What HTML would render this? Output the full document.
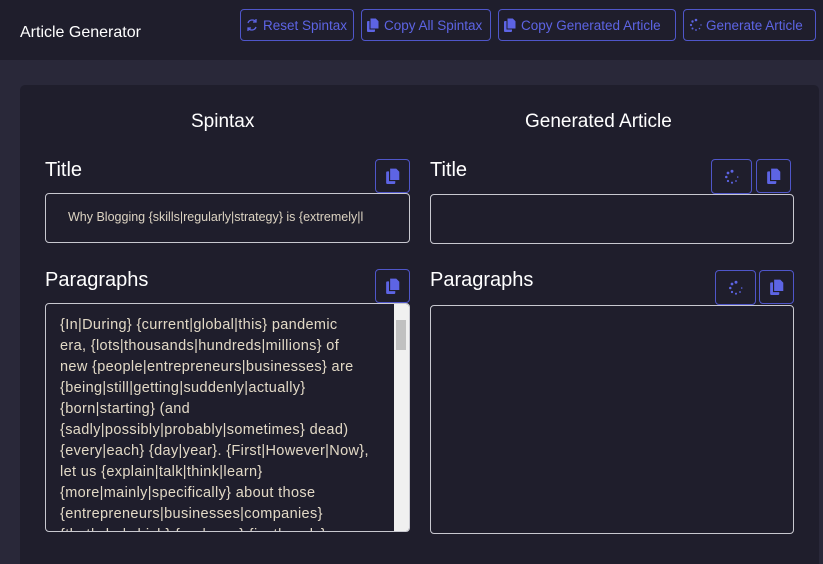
<!DOCTYPE html>
<html><head><style>
*{box-sizing:border-box;margin:0;padding:0}
html,body{width:823px;height:564px;overflow:hidden}
body{background:#292839;font-family:"Liberation Sans",sans-serif;position:relative}
.nav{position:absolute;left:0;top:0;width:823px;height:60px;background:#1f1e2c}
.brand{position:absolute;left:20px;top:24px;color:#fff;font-size:16px}
.nb{position:absolute;top:9px;height:32px;border:1px solid #4f56c9;border-radius:4px;color:#5d64e4;font-size:13.5px;line-height:31px;padding-left:22px;white-space:nowrap}
.nb svg{position:absolute;left:5px;top:8px}
.card{position:absolute;left:20px;top:85px;width:799px;height:479px;background:#1f1e2c;border-radius:5px 5px 0 0}
.h{position:absolute;color:#fff;font-size:19px}
.lbl{position:absolute;color:#fff;font-size:20px}
.ib{position:absolute;border:1px solid #4f56c9;border-radius:4px}
.ib svg{position:absolute;left:50%;top:50%;transform:translate(-50%,-50%)}
.box{position:absolute;border:1px solid #c8c8d0;border-radius:4px}
.ta{position:absolute;left:45px;top:303px;width:365px;height:229px;border:1px solid #c8c8d0;border-radius:4px;background:#1f1e2c;overflow:hidden}
.ta p{position:absolute;left:14px;top:11px;color:#e2d9c6;font-size:14.5px;line-height:21px;white-space:pre;letter-spacing:0.35px}
.sb{position:absolute;right:0;top:0;width:15px;height:100%;background:#f0f0f0}
.thumb{position:absolute;left:2px;top:16px;width:10px;height:30px;background:#c1c1c1}
</style></head><body>
<div class="nav">
<div class="brand">Article Generator</div>
<div class="nb" style="left:240px;width:114px"><svg width="12" height="14" viewBox="0 0 12 14"><path d="M10 4A4.5 4.5 0 0 0 2 5M2 10A4.5 4.5 0 0 0 10 9" fill="none" stroke="#5d64e4" stroke-width="1.3"/><path d="M10 1v3H7M2 13v-3h3" fill="none" stroke="#5d64e4" stroke-width="1.3"/></svg>Reset Spintax</div>
<div class="nb" style="left:361px;width:130px"><svg width="12" height="14" viewBox="0 0 12 14"><rect x="0" y="3" width="8" height="11" rx="1" fill="#5d64e4"/><path d="M3 0h6l3 3v8H3z" fill="#5d64e4" stroke="#1f1e2c" stroke-width="1"/></svg>Copy All Spintax</div>
<div class="nb" style="left:498px;width:178px"><svg width="12" height="14" viewBox="0 0 12 14"><rect x="0" y="3" width="8" height="11" rx="1" fill="#5d64e4"/><path d="M3 0h6l3 3v8H3z" fill="#5d64e4" stroke="#1f1e2c" stroke-width="1"/></svg>Copy Generated Article</div>
<div class="nb" style="left:683px;width:133px"><svg width="14" height="14" viewBox="0 0 14 14" fill="#5d64e4"><circle cx="7" cy="2" r="1.3"/><circle cx="3.5" cy="3.5" r="1.2"/><circle cx="2" cy="7" r="1.1"/><circle cx="3.5" cy="10.5" r="1"/><circle cx="7" cy="12" r=".9"/><circle cx="10.5" cy="10.5" r=".8"/><circle cx="12" cy="7" r=".7"/></svg>Generate Article</div>
</div>
<div class="card"></div>
<div class="h" style="left:191px;top:111px">Spintax</div>
<div class="h" style="left:525px;top:111px">Generated Article</div>

<div class="lbl" style="left:45px;top:159px">Title</div>
<div class="ib" style="left:375px;top:159px;width:35px;height:34px"><svg width="14" height="16" viewBox="0 0 12 14"><rect x="0" y="3" width="8" height="11" rx="1" fill="#5d64e4"/><path d="M3 0h6l3 3v8H3z" fill="#5d64e4" stroke="#1f1e2c" stroke-width="1"/></svg></div>
<div class="box" style="left:45px;top:193px;width:365px;height:50px;overflow:hidden"><div style="position:absolute;left:22px;top:16px;color:#dcd3c2;font-size:12.5px;white-space:nowrap">Why Blogging {skills|regularly|strategy} is {extremely|l</div></div>

<div class="lbl" style="left:430px;top:159px">Title</div>
<div class="ib" style="left:711px;top:159px;width:41px;height:35px"><svg width="16" height="16" viewBox="0 0 14 14" fill="#5d64e4"><circle cx="7" cy="2" r="1.3"/><circle cx="3.5" cy="3.5" r="1.2"/><circle cx="2" cy="7" r="1.1"/><circle cx="3.5" cy="10.5" r="1"/><circle cx="7" cy="12" r=".9"/><circle cx="10.5" cy="10.5" r=".8"/><circle cx="12" cy="7" r=".7"/></svg></div>
<div class="ib" style="left:756px;top:159px;width:35px;height:34px"><svg width="14" height="16" viewBox="0 0 12 14"><rect x="0" y="3" width="8" height="11" rx="1" fill="#5d64e4"/><path d="M3 0h6l3 3v8H3z" fill="#5d64e4" stroke="#1f1e2c" stroke-width="1"/></svg></div>
<div class="box" style="left:430px;top:194px;width:364px;height:50px"></div>

<div class="lbl" style="left:45px;top:269px">Paragraphs</div>
<div class="ib" style="left:375px;top:269px;width:35px;height:34px"><svg width="14" height="16" viewBox="0 0 12 14"><rect x="0" y="3" width="8" height="11" rx="1" fill="#5d64e4"/><path d="M3 0h6l3 3v8H3z" fill="#5d64e4" stroke="#1f1e2c" stroke-width="1"/></svg></div>
<div class="ta"><p>{In|During} {current|global|this} pandemic
era, {lots|thousands|hundreds|millions} of
new {people|entrepreneurs|businesses} are
{being|still|getting|suddenly|actually}
{born|starting} (and
{sadly|possibly|probably|sometimes} dead)
{every|each} {day|year}. {First|However|Now},
let us {explain|talk|think|learn}
{more|mainly|specifically} about those
{entrepreneurs|businesses|companies}
{that|who|which} {are|were} {just|newly}</p><div class="sb"><div class="thumb"></div></div></div>

<div class="lbl" style="left:430px;top:269px">Paragraphs</div>
<div class="ib" style="left:715px;top:270px;width:41px;height:35px"><svg width="16" height="16" viewBox="0 0 14 14" fill="#5d64e4"><circle cx="7" cy="2" r="1.3"/><circle cx="3.5" cy="3.5" r="1.2"/><circle cx="2" cy="7" r="1.1"/><circle cx="3.5" cy="10.5" r="1"/><circle cx="7" cy="12" r=".9"/><circle cx="10.5" cy="10.5" r=".8"/><circle cx="12" cy="7" r=".7"/></svg></div>
<div class="ib" style="left:759px;top:270px;width:35px;height:34px"><svg width="14" height="16" viewBox="0 0 12 14"><rect x="0" y="3" width="8" height="11" rx="1" fill="#5d64e4"/><path d="M3 0h6l3 3v8H3z" fill="#5d64e4" stroke="#1f1e2c" stroke-width="1"/></svg></div>
<div class="box" style="left:430px;top:305px;width:364px;height:229px"></div>
</body></html>
